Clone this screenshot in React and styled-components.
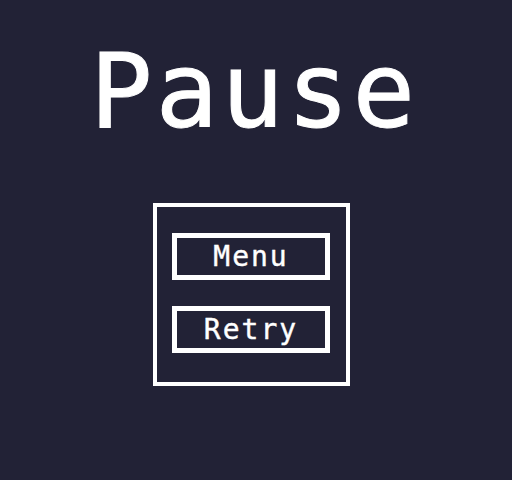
import React from "react";
import styled, { createGlobalStyle } from "styled-components";

const Global = createGlobalStyle`
  html, body {
    margin: 0;
    padding: 0;
    background: #222236;
  }
  body {
    font-family: "DejaVu Sans Mono", monospace;
    color: #ffffff;
  }
`;

const Screen = styled.div`
  width: 512px;
  height: 480px;
  background: #222236;
  display: flex;
  flex-direction: column;
  align-items: center;
`;

const Title = styled.h1`
  margin: 39px 4px 0 0;
  font-family: "DejaVu Sans Mono", monospace;
  font-weight: normal;
  font-size: 104px;
  line-height: 104px;
  letter-spacing: 3px;
  color: #ffffff;
  -webkit-text-stroke: 1px #ffffff;
`;

const Panel = styled.div`
  box-sizing: border-box;
  margin: 60px 9px 0 0;
  width: 197px;
  height: 183px;
  border: 4px solid #ffffff;
  display: flex;
  flex-direction: column;
  align-items: center;
  padding-top: 26px;
  gap: 26px;
`;

const Button = styled.button`
  box-sizing: border-box;
  width: 158px;
  height: 47px;
  margin-right: 1px;
  border: 5px solid #ffffff;
  background: transparent;
  color: #ffffff;
  font-family: "DejaVu Sans Mono", monospace;
  font-size: 28px;
  letter-spacing: 2px;
  -webkit-text-stroke: 0.4px #ffffff;
  padding: 0;
  display: flex;
  align-items: center;
  justify-content: center;
  cursor: pointer;
`;

export default function App() {
  return (
    <>
      <Global />
      <Screen>
        <Title>Pause</Title>
        <Panel>
          <Button>Menu</Button>
          <Button>Retry</Button>
        </Panel>
      </Screen>
    </>
  );
}
